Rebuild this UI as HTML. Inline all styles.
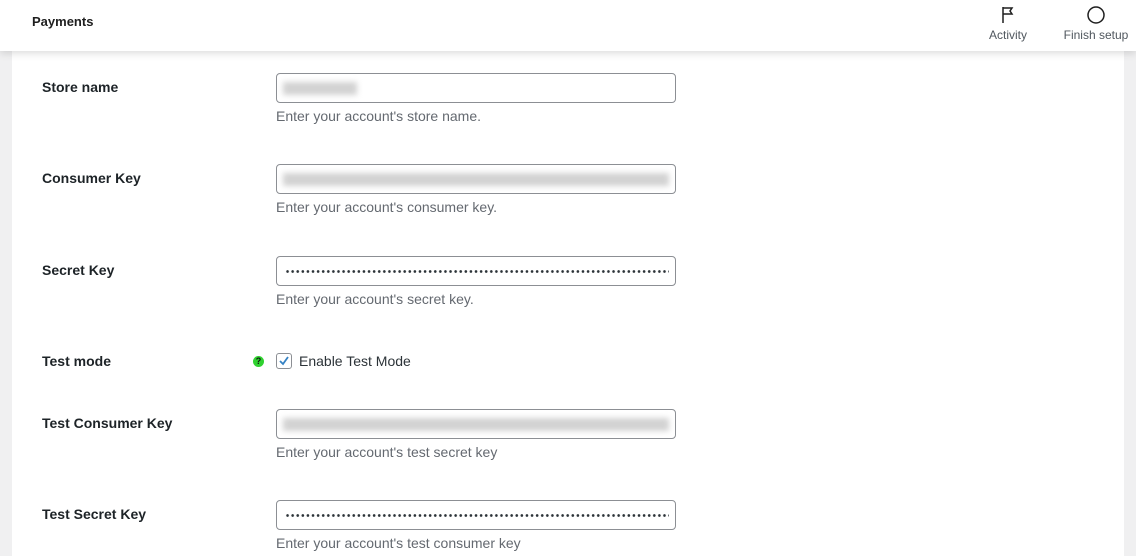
<!DOCTYPE html>
<html><head><style>
*{margin:0;padding:0;box-sizing:border-box}
body{width:1136px;height:556px;overflow:hidden;background:#f0f0f1;font-family:"Liberation Sans",sans-serif;position:relative}
.hdr{position:absolute;left:0;top:0;width:1136px;height:51px;background:#fff;box-shadow:0 2px 8px rgba(0,0,0,.15);z-index:2}
.hdr .t{position:absolute;left:32px;top:14px;font-size:13px;font-weight:bold;color:#1e1e1e}
.hi{position:absolute;top:5px;text-align:center;font-size:12px;color:#50575e;line-height:14px}
.card{position:absolute;left:12px;top:51px;width:1112px;height:505px;background:#fff}
.lbl{position:absolute;left:42px;font-size:14px;font-weight:bold;color:#1d2327}
.inp{position:absolute;left:276px;width:400px;height:30px;border:1px solid #8c8f94;border-radius:4px;background:#fff;overflow:hidden}
.blur{position:absolute;left:6px;top:8px;height:13px;background:#d2d2d2;filter:blur(3px)}
.dots{position:absolute;left:8px;top:12px;width:384px;height:5px;background:radial-gradient(circle,#2c3338 1.2px,transparent 1.5px);background-size:5.1px 5px}
.desc{position:absolute;left:276px;font-size:14px;color:#646970}
</style></head><body>
<div class="hdr"><div class="t">Payments</div>
<div class="hi" style="left:984px;width:48px"><svg width="20" height="20" viewBox="0 0 20 20"><path d="M5 2v16M5 3h9l-2 3 2 3H5" fill="none" stroke="#1e1e1e" stroke-width="1.5"/></svg><div>Activity</div></div>
<div class="hi" style="left:1058px;width:76px"><svg width="20" height="20" viewBox="0 0 20 20"><circle cx="10" cy="10" r="8" fill="none" stroke="#1e1e1e" stroke-width="1.5"/></svg><div>Finish setup</div></div>
</div>
<div class="card"></div>
<div class="lbl" style="top:79px">Store name</div>
<div class="inp" style="top:73px"><div class="blur" style="width:74px"></div></div>
<div class="desc" style="top:108px">Enter your account's store name.</div>
<div class="lbl" style="top:170px">Consumer Key</div>
<div class="inp" style="top:164px"><div class="blur" style="width:386px"></div></div>
<div class="desc" style="top:199px">Enter your account's consumer key.</div>
<div class="lbl" style="top:262px">Secret Key</div>
<div class="inp" style="top:256px"><div class="dots"></div></div>
<div class="desc" style="top:291px">Enter your account's secret key.</div>
<div class="lbl" style="top:353px">Test mode</div>
<div style="position:absolute;left:253px;top:356px;width:11px;height:11px;border-radius:50%;background:#2fd12f;color:#111;font-size:9px;font-weight:bold;text-align:center;line-height:11px">?</div>
<div style="position:absolute;left:276px;top:353px;width:16px;height:16px;border:1px solid #8c8f94;border-radius:3px;background:#fff"><svg width="14" height="14" viewBox="0 0 14 14"><path d="M3 7l3 3 5-7" fill="none" stroke="#3582c4" stroke-width="1.8"/></svg></div>
<div style="position:absolute;left:299px;top:353px;font-size:14px;color:#2c3338">Enable Test Mode</div>
<div class="lbl" style="top:415px">Test Consumer Key</div>
<div class="inp" style="top:409px"><div class="blur" style="width:386px"></div></div>
<div class="desc" style="top:444px">Enter your account's test secret key</div>
<div class="lbl" style="top:506px">Test Secret Key</div>
<div class="inp" style="top:500px"><div class="dots"></div></div>
<div class="desc" style="top:535px">Enter your account's test consumer key</div>
</body></html>
